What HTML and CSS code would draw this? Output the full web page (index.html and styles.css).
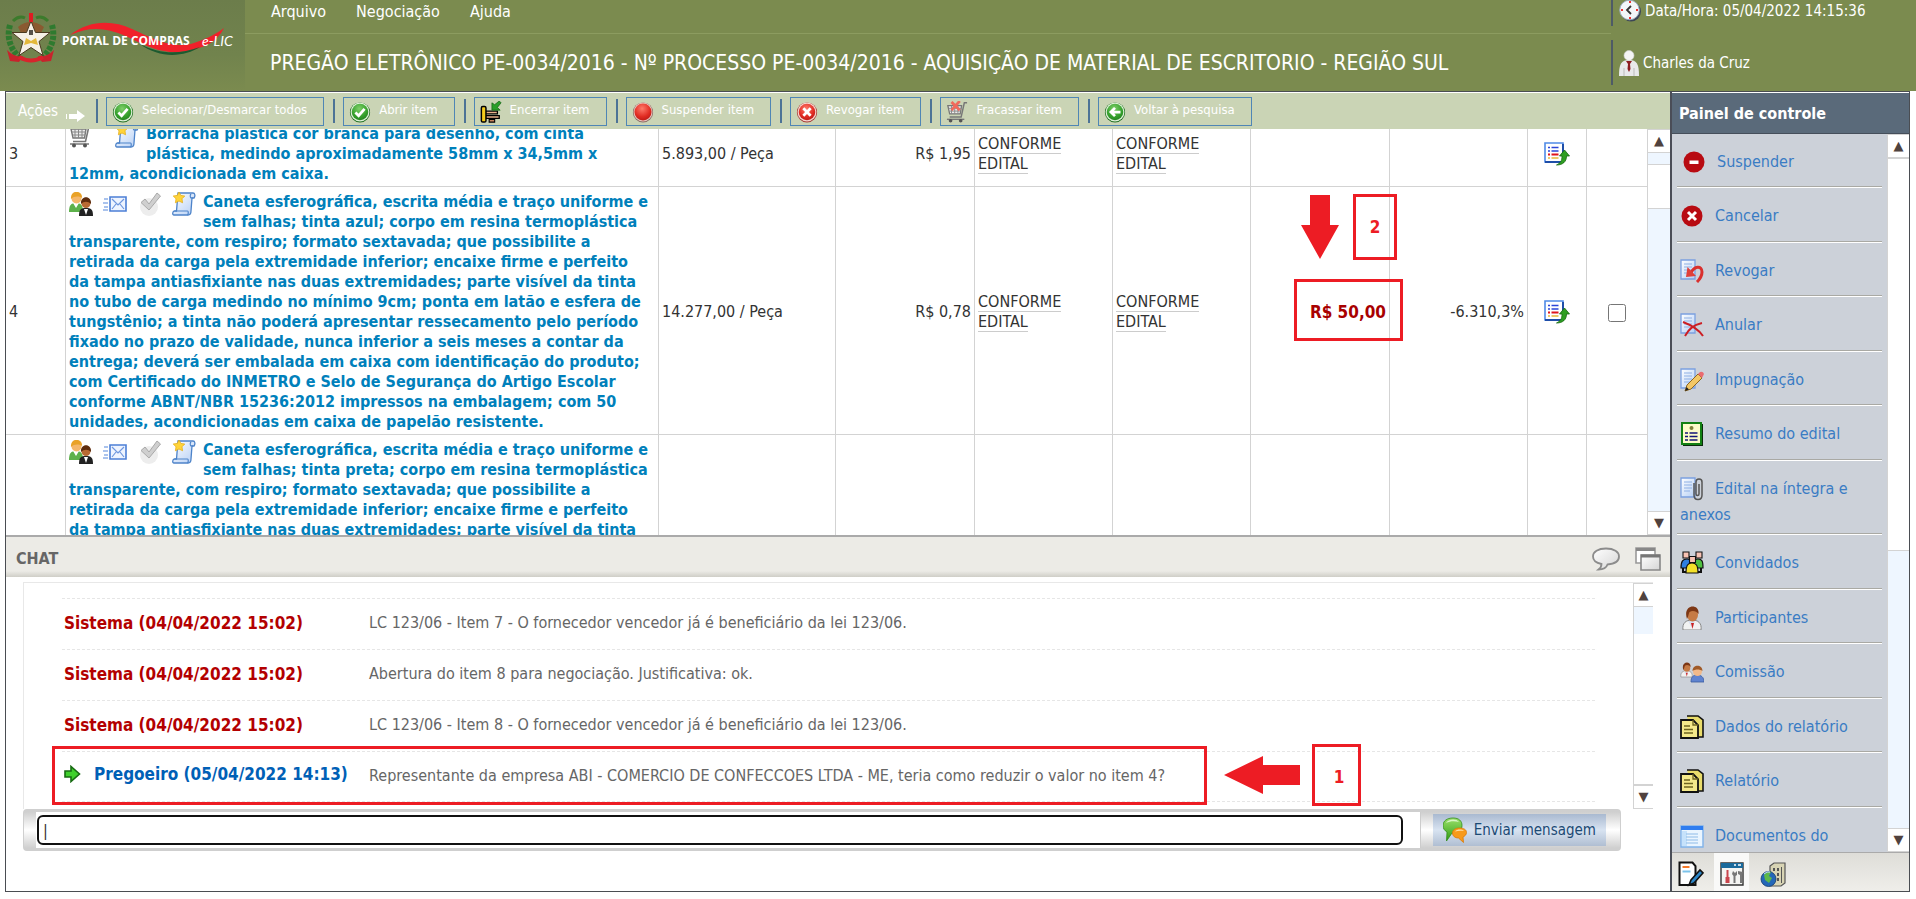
FILE: index.html
```html
<!DOCTYPE html>
<html lang="pt-BR">
<head>
<meta charset="utf-8">
<title>Portal de Compras e-LIC</title>
<link rel="stylesheet" href="styles.css">
</head>
<body>
<svg class="defs" aria-hidden="true">
  <defs>
    <radialGradient id="gGreen" cx=".45" cy=".3" r=".8"><stop offset="0" stop-color="#7fd06a"/><stop offset=".6" stop-color="#35a02c"/><stop offset="1" stop-color="#1d7a1c"/></radialGradient>
    <radialGradient id="gRed" cx=".45" cy=".3" r=".8"><stop offset="0" stop-color="#ff7a6a"/><stop offset=".6" stop-color="#e02b22"/><stop offset="1" stop-color="#b01512"/></radialGradient>
    <linearGradient id="gDoc" x1="0" y1="0" x2="1" y2="1"><stop offset="0" stop-color="#ffffff"/><stop offset="1" stop-color="#b5cff5"/></linearGradient>
    <linearGradient id="gBubble" x1="0" y1="0" x2="0" y2="1"><stop offset="0" stop-color="#9be06a"/><stop offset="1" stop-color="#2d9b12"/></linearGradient>
    <linearGradient id="gGray" x1="0" y1="0" x2="1" y2="1"><stop offset="0" stop-color="#ffffff"/><stop offset="1" stop-color="#d5d5d5"/></linearGradient>
  </defs>
  <symbol id="i-check" viewBox="0 0 24 24"><circle cx="12" cy="12.500" r="11" fill="#1e6e20"/><circle cx="12" cy="12" r="10.300" fill="#dff0d8"/><circle cx="12" cy="12" r="9" fill="url(#gGreen)"/><path d="M7 12.500l3.500 3.500 6.500-7.500" fill="none" stroke="#fff" stroke-width="3"/></symbol>
  <symbol id="i-back" viewBox="0 0 24 24"><circle cx="12" cy="12.500" r="11" fill="#1e6e20"/><circle cx="12" cy="12" r="10.300" fill="#dff0d8"/><circle cx="12" cy="12" r="9" fill="url(#gGreen)"/><path d="M18 12H9M12 7.500L7.500 12l4.500 4.500" fill="none" stroke="#fff" stroke-width="3"/></symbol>
  <symbol id="i-stop" viewBox="0 0 24 24"><circle cx="12" cy="12.500" r="11" fill="#8a6b66"/><circle cx="12" cy="12" r="10.300" fill="#e8c4bd"/><circle cx="12" cy="12" r="9.300" fill="url(#gRed)"/></symbol>
  <symbol id="i-revoke" viewBox="0 0 24 24"><circle cx="12" cy="12.500" r="11" fill="#a43a34"/><circle cx="12" cy="12" r="10.300" fill="#f6d4cf"/><circle cx="12" cy="12" r="9" fill="url(#gRed)"/><path d="M8 8l8 8M16 8l-8 8" stroke="#fff" stroke-width="3"/></symbol>
  <symbol id="i-gavel" viewBox="0 0 24 24"><path d="M6 11h13v3H6zM6 16h15v3H6z" fill="#e8b08a" stroke="#000" stroke-width="1.400"/><rect x="1.500" y="6" width="5" height="17" rx="1.500" fill="#f4cb1c" stroke="#000" stroke-width="1.600"/><path d="M10 20h6v3h-6z" fill="#c98560" stroke="#000" stroke-width="1.200"/><path d="M23 2l-2-2-5 4-3-2v8h9l-3-3z" fill="#2aa02a" stroke="#176417" stroke-width=".8"/></symbol>
  <symbol id="i-cart" viewBox="0 0 24 24"><path d="M2 5h15l-1.500 9H4z" fill="#ececec" stroke="#777" stroke-width="1.400"/><path d="M6 5v9M9.500 5v9M13 5v9M3 8h14M4 11h12" stroke="#888" stroke-width="1"/><path d="M23 2h-3l-3.500 15.500H4" fill="none" stroke="#777" stroke-width="1.600"/><path d="M1 20h19" stroke="#777" stroke-width="1.500"/><circle cx="5" cy="21.500" r="2" fill="#555"/><circle cx="16" cy="21.500" r="2" fill="#555"/></symbol>
  <symbol id="i-cartx" viewBox="0 0 24 24"><use href="#i-cart"/><path d="M6 1l9 9M15 0L6 10" stroke="#f06a5c" stroke-width="3"/></symbol>
  <symbol id="i-scroll" viewBox="0 0 24 24"><path d="M6 1h15c2 0 2.500 3 1 5h-2l-1 13c0 2-1 4-3 4H2c-2 0-1.500-4 .5-4h2z" fill="url(#gDoc)" stroke="#4d83c9" stroke-width="1.300"/><path d="M2.500 19h13c1 0 1 3 0 4M19 2c-1 1-1 3 0 4h2" fill="none" stroke="#4d83c9" stroke-width="1.200"/><path d="M7 0l1.800 3.400 4 .6-2.800 2.800.6 4L7 9l-3.600 1.800.6-4L1.200 4l4-.6z" fill="#ffd43a" stroke="#e3a80c" stroke-width=".7"/></symbol>
  <symbol id="i-people" viewBox="0 0 24 24"><path d="M0 20c0-7 2-9 7-9s7 2 7 9z" fill="#5db14b"/><path d="M4 11l3 5 3-5z" fill="#fff"/><circle cx="7.500" cy="6.500" r="5" fill="#f5b76a"/><path d="M2 7c-1-10 12-9 11-1-3-2-8-2-11 1z" fill="#e9a227"/><path d="M10 24c0-7 2-8 7-8s7 1 7 8z" fill="#222"/><path d="M15 17l2 6 2-6z" fill="#fff"/><circle cx="17" cy="11.500" r="4.500" fill="#b96a33"/><path d="M12 12c-1-9 11-9 10 0-3-3-7-3-10 0z" fill="#5e2c0d"/></symbol>
  <symbol id="i-mail" viewBox="0 0 24 18"><path d="M7 2h16v14H7z" fill="#eef4ff" stroke="#4c7fd6" stroke-width="1.600"/><path d="M9 4l6 6 6-6M9 14l4-5M21 14l-4-5" fill="none" stroke="#6f97de" stroke-width="1.200"/><path d="M1 4h4M0 8h5M1 12h4M0 15h5" stroke="#8fb0e8" stroke-width="1.300"/></symbol>
  <symbol id="i-tick" viewBox="0 0 24 24"><circle cx="11" cy="15" r="9" fill="#ededed"/><path d="M3 10.500L7 7l4 5L19 1l3.500 3L11 18z" fill="#cfcfcf" stroke="#a9a9a9" stroke-width="1"/></symbol>
  <symbol id="i-export" viewBox="0 0 26 24"><path d="M1 1h18v19H1z" fill="#fff" stroke="#4f8ae6" stroke-width="1.600"/><path d="M19 2v18H1" fill="none" stroke="#1f4ea8" stroke-width="2"/><path d="M4 5.500h2M4 9h2M7.500 5.500h7M7.500 9h7" stroke="#2b46d8" stroke-width="1.600"/><path d="M4 12.500h2M7.500 12.500h7" stroke="#e0141c" stroke-width="1.800"/><path d="M4 16h2M7.500 16h7" stroke="#e7b93a" stroke-width="1.600"/><path d="M20.500 8l5 6h-3c0 6-4 9-10 9 4-2 5.500-4 5.500-9h-2.500z" fill="#2f9e22" stroke="#17680f" stroke-width=".8"/></symbol>
  <symbol id="i-page" viewBox="0 0 24 24"><path d="M1 1h14v19H1z" fill="url(#gDoc)" stroke="#7ba0e0" stroke-width="1.300"/><path d="M4 5h8M4 8h8M4 11h8M4 14h6" stroke="#8fb0e4" stroke-width="1"/></symbol>
  <symbol id="i-reports" viewBox="0 0 24 24"><path d="M7 1h11l5 4v17H12" fill="#e9dc6b" stroke="#111" stroke-width="1.600"/><path d="M1 5h12l5 5v13H1z" fill="#f4e98a" stroke="#111" stroke-width="1.800"/><path d="M13 5v5h5M4 11h6M4 14.500h9M4 18h9" fill="none" stroke="#6d6420" stroke-width="1.300"/></symbol>
  <symbol id="i-head" viewBox="0 0 24 24"><path d="M3 24c-1-7 3-10 9-10s10 3 9 10z" fill="#f2f2f2" stroke="#888" stroke-width="1"/><path d="M8 15l4 7 3-7z" fill="#d9e0ee"/><path d="M11 17l1.500 6 1.500-6z" fill="#c22"/><ellipse cx="12.500" cy="9" rx="5.500" ry="6.500" fill="#c67a45"/><path d="M7 13C2-2 20-3 18.500 8c-2-3-6-4-9-2-1 2-1 4-2.500 7z" fill="#7d3715"/></symbol>
</svg>

<header class="top">
  <div class="brand">
    <svg class="brand-art" viewBox="0 0 245 91" aria-hidden="true">
      <path d="M10 25q-5 18 9 32M52 25q5 18-9 32" fill="none" stroke="#2f7a2f" stroke-width="6" stroke-dasharray="4 1.500"/>
      <path d="M13 21q6-6 12-3M48 21q-6-6-12-3" stroke="#3c7b2c" stroke-width="3" fill="none"/>
      <path d="M7 50q8 8 16 6l-4 6-9-1zM54 50q-8 8-16 6l4 6 9-1z" fill="#c8232c"/>
      <path d="M19 57q12 7 24 0" stroke="#d8242c" stroke-width="4" fill="none"/>
      <path d="M18 27q12-10 26 0l-4 8H22z" fill="#8a5a30"/>
      <path d="M31 21l4.500 11.500 14.500 0-11 9 4 14-12-8-12 8 4-14-11-9 14.500 0z" fill="#f5f0e6" stroke="#4b3a20" stroke-width="1"/>
      <path d="M26 38l5 3 5-3 2 7-7-2-7 2z" fill="#e3b83b"/><path d="M29 30h4v5h-4z" fill="#55504a"/>
      <path d="M29 13h4v9h-4z" fill="#e01b22"/>
      <path d="M70 35C90 20 112 20 132 29c26 12 42 20 62 14 14-5 22-9 30-15-7 14-20 20-36 23-22 4-38-3-56-12-22-11-40-14-62-4z" fill="#f0202a"/>
      <path d="M140 44c20 10 38 11 60 3-16 10-40 12-60-3z" fill="#1d5a30"/>
    </svg>
    <span class="brand-name">PORTAL DE COMPRAS</span>
    <span class="brand-sub">e-LIC</span>
  </div>
  <div class="top-main">
    <nav class="menu">
      <a href="#">Arquivo</a><a href="#">Negociação</a><a href="#">Ajuda</a>
    </nav>
    <h1 class="title">PREGÃO ELETRÔNICO PE-0034/2016 - Nº PROCESSO PE-0034/2016 - AQUISIÇÃO DE MATERIAL DE ESCRITORIO - REGIÃO SUL</h1>
  </div>
  <div class="top-side">
    <div class="clock">
      <svg width="22" height="24" viewBox="0 0 22 24"><circle cx="12" cy="12.500" r="10" fill="#3c4656"/><circle cx="10.500" cy="11" r="9.800" fill="#f3f7fa" stroke="#9ab" stroke-width="1"/><path d="M12 7l-4 4 4 4" fill="none" stroke="#333" stroke-width="1.800"/><path d="M10 2h2v2h-2zM10 18h2v2h-2zM2 10h2v2H2zM17 10h2v2h-2z" fill="#e33"/></svg>
      <span>Data/Hora: 05/04/2022 14:15:36</span>
    </div>
    <div class="user">
      <svg width="20" height="26" viewBox="0 0 20 26"><path d="M0 26c0-12 2-16 10-16s10 4 10 16z" fill="#e8e9ea"/><path d="M5 18v8M15 18v8" stroke="#bbb"/><circle cx="10" cy="5.500" r="5" fill="#f4f4f4" stroke="#ccc" stroke-width=".6"/><path d="M7 11h6l-2 3 .5 5-1.500 3-1.500-3 .5-5z" fill="#8c1c20"/></svg>
      <span>Charles da Cruz</span>
    </div>
  </div>
</header>

<main class="app">
  <section class="work">
    <div class="toolbar">
      <span class="tb-label">Ações</span>
      <svg class="tb-arrow" width="20" height="14" viewBox="0 0 20 14"><path d="M0 5h1v5H0zM3 5h8V1l8 6-8 6v-3H3z" fill="#fff"/></svg>
      <button type="button" class="tb-btn"><svg><use href="#i-check"/></svg>Selecionar/Desmarcar todos</button>
      <button type="button" class="tb-btn"><svg><use href="#i-check"/></svg>Abrir item</button>
      <button type="button" class="tb-btn"><svg><use href="#i-gavel"/></svg>Encerrar item</button>
      <button type="button" class="tb-btn"><svg><use href="#i-stop"/></svg>Suspender item</button>
      <button type="button" class="tb-btn"><svg><use href="#i-revoke"/></svg>Revogar item</button>
      <button type="button" class="tb-btn"><svg><use href="#i-cartx"/></svg>Fracassar item</button>
      <button type="button" class="tb-btn"><svg><use href="#i-back"/></svg>Voltar à pesquisa</button>
    </div>

    <div class="grid-area">
      <div class="grid-view">
        <table class="items">
          <colgroup><col class="c-no"><col class="c-desc"><col class="c-qty"><col class="c-wide"><col class="c-val"><col class="c-val"><col class="c-wide"><col class="c-val"><col class="c-ico"><col class="c-no"></colgroup>
          <tbody>
            <tr>
              <td>3</td>
              <td class="desc"><span class="icons icons-two"><svg class="ic"><use href="#i-cart"/></svg><svg class="ic"><use href="#i-scroll"/></svg></span>Borracha plastica cor branca para desenho, com cinta<br>plástica, medindo aproximadamente 58mm x 34,5mm x<br>12mm, acondicionada em caixa.</td>
              <td>5.893,00 / Peça</td><td class="num">R$ 1,95</td>
              <td><abbr>CONFORME EDITAL</abbr></td><td><abbr>CONFORME EDITAL</abbr></td><td></td><td></td>
              <td class="mid"><button type="button" class="icon-btn" aria-label="Propostas"><svg class="export"><use href="#i-export"/></svg></button></td><td></td>
            </tr>
            <tr>
              <td>4</td>
              <td class="desc"><span class="icons"><svg class="ic"><use href="#i-people"/></svg><svg class="ic ic-mail"><use href="#i-mail"/></svg><svg class="ic"><use href="#i-tick"/></svg><svg class="ic"><use href="#i-scroll"/></svg></span>Caneta esferográfica, escrita média e traço uniforme e<br>sem falhas; tinta azul; corpo em resina termoplástica<br>transparente, com respiro; formato sextavada; que possibilite a<br>retirada da carga pela extremidade inferior; encaixe firme e perfeito<br>da tampa antiasfixiante nas duas extremidades; parte visível da tinta<br>no tubo de carga medindo no mínimo 9cm; ponta em latão e esfera de<br>tungstênio; a tinta não poderá apresentar ressecamento pelo período<br>fixado no prazo de validade, nunca inferior a seis meses a contar da<br>entrega; deverá ser embalada em caixa com identificação do produto;<br>com Certificado do INMETRO e Selo de Segurança do Artigo Escolar<br>conforme ABNT/NBR 15236:2012 impressos na embalagem; com 50<br>unidades, acondicionadas em caixa de papelão resistente.</td>
              <td>14.277,00 / Peça</td><td class="num">R$ 0,78</td>
              <td><abbr>CONFORME EDITAL</abbr></td><td><abbr>CONFORME EDITAL</abbr></td>
              <td class="num best">R$ 50,00
                <span class="mark mark-price"></span>
                <svg class="arrow arrow-down" viewBox="0 0 38 64"><path d="M9 0h20v30h9L19 64 0 30h9z"/></svg>
                <span class="mark mark-two">2</span>
              </td>
              <td class="num">-6.310,3%</td>
              <td class="mid"><button type="button" class="icon-btn" aria-label="Propostas"><svg class="export"><use href="#i-export"/></svg></button></td>
              <td class="mid"><input type="checkbox" class="pick" aria-label="Selecionar item 4"></td>
            </tr>
            <tr>
              <td></td>
              <td class="desc"><span class="icons"><svg class="ic"><use href="#i-people"/></svg><svg class="ic ic-mail"><use href="#i-mail"/></svg><svg class="ic"><use href="#i-tick"/></svg><svg class="ic"><use href="#i-scroll"/></svg></span>Caneta esferográfica, escrita média e traço uniforme e<br>sem falhas; tinta preta; corpo em resina termoplástica<br>transparente, com respiro; formato sextavada; que possibilite a<br>retirada da carga pela extremidade inferior; encaixe firme e perfeito<br>da tampa antiasfixiante nas duas extremidades; parte visível da tinta</td>
              <td></td><td></td><td></td><td></td><td></td><td></td><td></td><td></td>
            </tr>
          </tbody>
        </table>
      </div>
      <div class="scroll"><button type="button" class="sc-btn" aria-label="Subir">▲</button><div class="sc-track"><div class="sc-thumb thumb-grid"></div></div><button type="button" class="sc-btn" aria-label="Descer">▼</button></div>
    </div>

    <div class="chat-head">
      <h2>CHAT</h2>
      <svg width="28" height="24" viewBox="0 0 28 24"><path d="M14 1.500C6 1.500 1 5 1 9.500c0 4 3.500 6.500 8.500 7.500 0 2-1 4-3 5.500 5 0 8-2 9-5 7-.5 11.500-3.500 11.500-8 0-4.500-5-8-13-8z" fill="url(#gGray)" stroke="#8c8c8c" stroke-width="1.800"/></svg>
      <svg width="26" height="24" viewBox="0 0 26 24"><path d="M1 1h19v15H1z" fill="#fff" stroke="#999" stroke-width="1.600"/><path d="M1 2.500h19" stroke="#888" stroke-width="3"/><path d="M6 8h19v15H6z" fill="url(#gGray)" stroke="#888" stroke-width="1.600"/><path d="M6 9h19" stroke="#777" stroke-width="3"/></svg>
    </div>

    <div class="chat">
      <div class="log">
        <div class="msgs">
          <div class="msg"><strong>Sistema (04/04/2022 15:02)</strong><span>LC 123/06 - Item 7 - O fornecedor vencedor já é beneficiário da lei 123/06.</span></div>
          <div class="msg"><strong>Sistema (04/04/2022 15:02)</strong><span>Abertura do item 8 para negociação. Justificativa: ok.</span></div>
          <div class="msg"><strong>Sistema (04/04/2022 15:02)</strong><span>LC 123/06 - Item 8 - O fornecedor vencedor já é beneficiário da lei 123/06.</span></div>
          <div class="msg own"><strong><svg width="17" height="18" viewBox="0 0 17 18"><path d="M1 6h6V1.500l8.500 7.500L7 16.500V12H1z" fill="#3fd02c" stroke="#176b12" stroke-width="1.600"/></svg>Pregoeiro (05/04/2022 14:13)</strong><span>Representante da empresa ABI - COMERCIO DE CONFECCOES LTDA - ME, teria como reduzir o valor no item 4?</span>
            <span class="mark mark-msg"></span>
            <svg class="arrow arrow-left" viewBox="0 0 76 38"><path d="M0 19L39 0v9h37v20H39v9z"/></svg>
            <span class="mark mark-one">1</span>
          </div>
        </div>
        <div class="scroll"><button type="button" class="sc-btn" aria-label="Subir">▲</button><div class="sc-track"><div class="sc-thumb thumb-log"></div></div><button type="button" class="sc-btn" aria-label="Descer">▼</button></div>
      </div>
      <form class="send">
        <div class="field"><input type="text" value="|" aria-label="Mensagem"></div>
        <button type="button" class="send-btn"><svg width="24" height="26" viewBox="0 0 24 26"><path d="M10 1C4 1 0 4 0 8.500c0 3 1.500 5 4 6.500l-.5 9L9 16c7 0 10-3 10-7.500C19 4 16 1 10 1z" fill="url(#gBubble)" stroke="#2f8d16" stroke-width=".8"/><path d="M3 6c2-4 10-5 13-1-4-1-9-1-13 1z" fill="#d9f6c8"/><path d="M16.500 11c-4 0-7 2-7 5s2.500 5 6 5l5 4.500-.5-5.500c2-1 3.500-2.500 3.500-4.500 0-3-3-4.500-7-4.500z" fill="#f79a1c" stroke="#d97a08" stroke-width=".8"/><path d="M12 14.500c2-2.500 7-2.500 9-.5-3-.5-6-.5-9 .5z" fill="#ffe0a8"/></svg>Enviar mensagem</button>
      </form>
    </div>
  </section>

  <aside class="panel">
    <h2 class="panel-title">Painel de controle</h2>
    <div class="panel-body">
      <ul class="links">
        <li class="first"><svg class="ic" viewBox="0 0 24 24"><circle cx="12" cy="12" r="10.500" fill="#b80b12"/><path d="M7.500 10.500h9v3.500h-9z" fill="#fff"/></svg><a href="#">Suspender</a></li>
        <li><svg class="ic" viewBox="0 0 24 24"><circle cx="12" cy="12" r="10.500" fill="#b80b12"/><path d="M8 8l8 8M16 8l-8 8" stroke="#fff" stroke-width="3"/></svg><a href="#">Cancelar</a></li>
        <li><svg class="ic" viewBox="0 0 24 24"><use href="#i-page"/><path d="M11 14c3-7 11-8 11-1 0 4-2 7-5 10" fill="none" stroke="#d9302e" stroke-width="3"/><path d="M6 18l1.500-10 8.500 9z" fill="#e0403a"/></svg><a href="#">Revogar</a></li>
        <li><svg class="ic" viewBox="0 0 24 24"><use href="#i-page"/><path d="M3 9c8 3 16 8 20 14M22 10C13 12 9 16 5 23" fill="none" stroke="#cc1f24" stroke-width="2"/></svg><a href="#">Anular</a></li>
        <li><svg class="ic" viewBox="0 0 24 24"><use href="#i-page"/><path d="M5 23l2-6L18 6l4 4L11 21z" fill="#f3c765" stroke="#8d6620" stroke-width="1"/><path d="M18 6l2-2q3-1 4 2l-2 4z" fill="#ea6b70"/><path d="M5 23l1.500-4 2.500 2.500z" fill="#222"/></svg><a href="#">Impugnação</a></li>
        <li><svg class="ic" viewBox="0 0 24 24"><path d="M3 2h20v22H3z" fill="#0c2a0c"/><path d="M2 1h19v21H2z" fill="#fdfcc9" stroke="#128012" stroke-width="2"/><circle cx="11.500" cy="6" r="2" fill="#80803a"/><path d="M5 11h3M5 14.500h3M5 18h3M9.500 11h8M9.500 14.500h8M9.500 18h8" stroke="#15157a" stroke-width="1.600"/></svg><a href="#">Resumo do edital</a></li>
        <li><svg class="ic" viewBox="0 0 24 24"><use href="#i-page"/><path d="M14 6v12c0 6 8 6 8 0V5c0-4-6-4-6 0v12c0 2 3 2 3 0V7" fill="none" stroke="#555" stroke-width="1.500"/></svg><a href="#">Edital na íntegra e<br>anexos</a></li>
        <li><svg class="ic" viewBox="0 0 24 24"><path d="M1 17c0-7 2-9 6-9s5 2 5 9z" fill="#2f7fe0" stroke="#111" stroke-width="1.200"/><path d="M12 17c0-7 2-9 6-9s5 2 5 9z" fill="#4fc03f" stroke="#111" stroke-width="1.200"/><path d="M6 22c0-8 2-10 6-10s6 2 6 10z" fill="#f4e12a" stroke="#111" stroke-width="1.200"/><path d="M3 1h6v6H3zM16 1h6v6h-6zM9.500 5.500h6v6h-6z" fill="#f9c3b4" stroke="#111" stroke-width="1.100"/><path d="M3 17v4h3M21 17v4h-3" stroke="#111" stroke-width="2" fill="none"/></svg><a href="#">Convidados</a></li>
        <li><svg class="ic"><use href="#i-head"/></svg><a href="#">Participantes</a></li>
        <li><svg class="ic" viewBox="0 0 24 24"><use href="#i-head" x="-1" y="1" width="15" height="17"/><path d="M11 22c0-5 2-7 6-7s7 2 7 7z" fill="#5f83d0" stroke="#3a5aa0" stroke-width=".8"/><circle cx="17.500" cy="11.500" r="4.500" fill="#f1b98a"/><path d="M12.500 11c0-7 10-7 10 0-3-2-7-2-10 0z" fill="#a05a28"/></svg><a href="#">Comissão</a></li>
        <li><svg class="ic"><use href="#i-reports"/></svg><a href="#">Dados do relatório</a></li>
        <li><svg class="ic"><use href="#i-reports"/></svg><a href="#">Relatório</a></li>
        <li><svg class="ic" viewBox="0 0 24 24"><path d="M1 2h22v21H1z" fill="#eaf5ff" stroke="#7fb2ea" stroke-width="1.400"/><path d="M1 2h22v4H1z" fill="#2f7df0"/><path d="M2 7h5v15H2z" fill="#c6e2fb"/><path d="M6 10h12M6 13h12M6 16h12M6 19h12" stroke="#8dbbe8" stroke-width="1.200"/></svg><a href="#">Documentos do</a></li>
      </ul>
      <div class="scroll"><button type="button" class="sc-btn" aria-label="Subir">▲</button><div class="sc-track"><div class="sc-thumb thumb-panel"></div></div><button type="button" class="sc-btn" aria-label="Descer">▼</button></div>
    </div>
    <div class="tabs">
      <button type="button" aria-label="Editar"><svg width="26" height="26" viewBox="0 0 26 26"><path d="M1.500 1.500h13l3 3.500v19h-16z" fill="#fff" stroke="#111" stroke-width="2"/><path d="M4.500 6h7" stroke="#f47a2a" stroke-width="2"/><path d="M4.500 10.500h8" stroke="#7cc3ea" stroke-width="2"/><path d="M11 24l2-5L22 9l3 3-9 10z" fill="#2c86c8" stroke="#111" stroke-width="1.600"/></svg></button>
      <button type="button" class="on" aria-label="Ferramentas"><svg width="24" height="24" viewBox="0 0 24 24"><path d="M1 1h22v22H1z" fill="#f4f4f2" stroke="#333" stroke-width="1.400"/><path d="M1 1h22v5H1z" fill="#1a6a9c"/><path d="M14 3h2M18 3h3" stroke="#fff" stroke-width="1.500"/><path d="M6.500 8h2v7h1v6h-4v-6h1z" fill="#c9444c"/><path d="M13 9l2 2 2-2v4l-1.500 1v7h-2v-7L12 12zM18 9v3l2 1v8h2v-8l1-3z" fill="#777"/></svg></button>
      <button type="button" aria-label="Internet"><svg width="28" height="26" viewBox="0 0 28 26"><path d="M10 5l4-3h11v20l-4 3H10z" fill="#d8d4b4" stroke="#555" stroke-width="1.200"/><path d="M13 7h2v3h-2zM17 7h2v3h-2zM17 12h2v3h-2zM17 17h2v3h-2zM21 6h1v16h-1z" fill="#555"/><circle cx="8.500" cy="18" r="7.500" fill="#2467b8" stroke="#123a6c" stroke-width=".8"/><path d="M4 14q3-4 7-3l-2 4 3 2-3 5-4-3z" fill="#5db84a"/><path d="M4 13q3-3 6-2" stroke="#cfe5ff" fill="none"/></svg></button>
    </div>
  </aside>
</main>
</body>
</html>
```

FILE: styles.css
```css
:root {
  --sans: "DejaVu Sans Condensed", Tahoma, "Noto Sans", sans-serif;
  --mark: #ed1c24;
  --line: #d3d3d3;
}
* { box-sizing: border-box; }
html, body { height: 100%; }
body {
  margin: 0;
  display: flex;
  flex-direction: column;
  background: #fff;
  color: #333;
  font: 16px/20px var(--sans);
}
button { font: inherit; color: inherit; cursor: pointer; }
a { text-decoration: none; color: inherit; }
h1, h2 { margin: 0; }
.defs { position: absolute; width: 0; height: 0; }
.ic { width: 24px; height: 24px; }

/* header */
.top {
  display: flex;
  flex: none;
  height: 91px;
  background: #7b8b4f;
  color: #fff;
}
.brand {
  position: relative;
  width: 245px;
  background: linear-gradient(180deg, #6c7d4b, #71834d 60%, #7b8b4f);
}
.brand-art { display: block; width: 245px; height: 91px; }
.brand-name, .brand-sub { position: absolute; top: 31px; line-height: 20px; white-space: nowrap; }
.brand-name { left: 62px; font-family: "Open Sans", sans-serif; font-size: 12px; font-weight: 700; }
.brand-sub { left: 202px; font-family: Lato, sans-serif; font-size: 14px; font-style: italic; }
.top-main { flex: 1; }
.menu {
  display: flex;
  gap: 30px;
  height: 34px;
  padding: 2px 0 0 26px;
  border-bottom: 1px solid #8c9c60;
}
.title {
  padding: 15px 0 0 25px;
  font-size: 21px;
  line-height: 28px;
  font-weight: 400;
  white-space: nowrap;
}
.top-side {
  display: flex;
  flex-direction: column;
  gap: 14px;
  width: 305px;
  font-size: 15px;
}
.clock, .user {
  display: flex;
  align-items: center;
  gap: 4px;
  padding-left: 6px;
  border-left: 2px solid #4e5b66;
}
.clock { height: 26px; padding-bottom: 4px; }
.user { height: 45px; }

/* frame */
.app {
  flex: 1;
  min-height: 0;
  display: flex;
  margin: 0 6px 7px 5px;
  border: 1px solid #4a4d52;
}
.work {
  flex: 1;
  min-width: 0;
  display: flex;
  flex-direction: column;
  border-right: 2px solid #4a4d57;
}

/* toolbar */
.toolbar {
  display: flex;
  flex: none;
  align-items: center;
  height: 37px;
  border-top: 1px solid #fff;
  padding-left: 12px;
  background: #cad4b5;
  color: #fff;
}
.tb-label { width: 48px; font-size: 15px; }
.tb-arrow { margin: 10px 11px 0 0; }
.tb-btn {
  position: relative;
  display: flex;
  align-items: center;
  gap: 8px;
  height: 29px;
  margin-left: 9px;
  margin-right: 10px;
  padding: 0 16px 3px 5px;
  border: 1px solid #4f86b5;
  background: none;
  font-size: 13px;
  white-space: nowrap;
}
.tb-btn svg { width: 22px; height: 22px; margin-top: 5px; }
.tb-btn::before {
  content: "";
  position: absolute;
  left: -11px;
  top: 1px;
  width: 2px;
  height: 24px;
  background: #4d7396;
}

/* item table */
.grid-area { flex: 1; min-height: 0; display: flex; }
.grid-view { flex: 1; min-width: 0; overflow: hidden; }
.items {
  width: 100%;
  margin-top: -10px;
  table-layout: fixed;
  border-collapse: separate;
  border-spacing: 0;
}
.c-no { width: 60px; }
.c-desc { width: 593px; }
.c-qty { width: 177px; }
.c-val { width: 138px; }
.c-wide { width: 139px; }
.c-ico { width: 59px; }
.items td {
  padding: 5px 3px 2px;
  border-right: 1px solid var(--line);
  border-bottom: 1px solid var(--line);
  vertical-align: middle;
}
.items td:last-child { border-right: 0; }
.items .desc { color: #0080bb; font-weight: 700; white-space: nowrap; vertical-align: top; }
.icons { float: left; display: flex; justify-content: space-between; width: 134px; height: 40px; padding-right: 7px; }
.icons-two { width: 77px; }
.icons .ic-mail { height: 18px; margin-top: 3px; }
.num { text-align: right; }
.mid { text-align: center; }
.items .best { position: relative; padding-right: 3px; color: #a80000; font-size: 17px; font-weight: 700; }
abbr { border-bottom: 1px solid #ccc; }
.icon-btn { padding: 0; border: 0; background: none; vertical-align: middle; }
.export { display: block; width: 26px; height: 24px; }
.pick { width: 18px; height: 18px; margin: 0; vertical-align: middle; }

/* scrollbars */
.scroll {
  flex: none;
  display: flex;
  flex-direction: column;
  width: 23px;
  border-left: 1px solid var(--line);
  background: #eef6ff;
}
.sc-btn {
  height: 24px;
  padding: 0;
  border: 1px solid var(--line);
  border-width: 1px 0;
  background: #fff;
  color: #50423e;
  font: 13px/20px "DejaVu Sans", sans-serif;
}
.sc-track { flex: 1; min-height: 0; }
.sc-thumb { background: #fff; border: 1px solid var(--line); border-width: 1px 0; }
.thumb-grid { height: 45px; margin-top: 11px; }
.thumb-log { height: 100%; border-top: 27px solid #eef6ff; }
.thumb-panel { height: 393px; }

/* chat */
.chat-head {
  display: flex;
  flex: none;
  align-items: center;
  gap: 15px;
  height: 42px;
  padding: 4px 9px 0 10px;
  border-top: 2px solid #aaa;
  background: linear-gradient(#ecebe6 85%, #cfcec7);
}
.chat-head h2 { flex: 1; font-size: 16px; color: #666; }
.chat { flex: none; padding: 5px 17px 40px; }
.log { display: flex; border: 1px solid #e8e8e8; border-width: 1px 0 0 1px; }
.msgs { flex: 1; padding: 15px 38px 7px; }
.msg {
  position: relative;
  display: grid;
  grid-template-columns: 305px 1fr;
  align-items: center;
  height: 51px;
  padding: 0 2px 2px;
  border-top: 1px dashed #e6e6e6;
  color: #666;
}
.msg:last-child { border-bottom: 1px dashed #e6e6e6; }
.msg strong { display: flex; align-items: center; gap: 13px; font-size: 17px; color: #b30000; }
.msg.own strong { padding-bottom: 4px; color: #0060b6; }
.log .scroll { width: 20px; }
.send {
  display: flex;
  align-items: center;
  height: 42px;
  margin-right: 32px;
  padding: 0 14px 0 12px;
  border: 2px solid #cfcfcf;
  border-width: 3px 1px;
  border-radius: 4px;
  background: linear-gradient(#cfcfcf, #fff 50%, #cfcfcf);
}
.field { flex: 1; height: 36px; padding: 3px 17px 3px 1px; background: #fff; border-right: 1px solid #ccc; }
.field input {
  width: 100%;
  height: 30px;
  padding: 0 4px;
  border: 2px solid #111;
  border-radius: 6px;
  outline: 0;
  background: #fff;
  color: #333;
  font: 16px/20px var(--sans);
}
.send-btn {
  display: flex;
  align-items: center;
  gap: 7px;
  height: 32px;
  margin-left: 12px;
  padding: 0 10px;
  border: 0;
  background: linear-gradient(#a9b9d0, #d8e3f1 50%, #b0bed2);
  color: #1c4a74;
  font-size: 15px;
  white-space: nowrap;
}

/* control panel */
.panel { flex: none; width: 237px; display: flex; flex-direction: column; }
.panel-title {
  flex: none;
  height: 42px;
  padding: 11px 7px;
  border-top: 1px solid #fff;
  border-bottom: 1px solid #454e5a;
  background: #5a6a7a;
  color: #fff;
  font-size: 16px;
  line-height: 20px;
}
.panel-body { flex: 1; min-height: 0; display: flex; background: #ccd1d9; overflow: hidden; }
.panel-body .scroll { width: 22px; }
.links { flex: 1; margin: 0; padding: 0 5px; list-style: none; overflow: hidden; color: #3a7cc4; }
.links li { padding: 12px 3px 9px; border-bottom: 1px solid #fff; box-shadow: inset 0 -1px #a9a9a4; }
.links li:nth-child(even) { padding-bottom: 10px; }
.links .ic { margin: 4px 11px 4px 0; vertical-align: middle; }
.links .first { padding-left: 5px; }
.tabs { flex: none; display: flex; height: 39px; border-top: 1px solid #aaa; background: linear-gradient(#deddd8, #efeeea); }
.tabs button { display: flex; align-items: center; padding: 3px 5px 0 6px; border: 0; background: none; margin-right: 5px; }
.tabs .on { background: #f9f9f8; }

/* callouts */
.mark {
  position: absolute;
  display: flex;
  align-items: center;
  justify-content: center;
  border: 3px solid var(--mark);
  color: var(--mark);
  font-weight: 700;
  font-size: 17px;
}
.arrow { position: absolute; fill: var(--mark); }
.mark-price { right: -14px; top: 92px; width: 109px; height: 62px; }
.arrow-down { right: 50px; top: 8px; width: 38px; height: 64px; }
.mark-two { right: -8px; top: 7px; width: 44px; height: 66px; }
.mark-msg { left: -10px; top: -6px; width: 1155px; height: 59px; }
.arrow-left { left: 1162px; top: 4px; width: 76px; height: 38px; }
.mark-one { left: 1250px; top: -8px; width: 49px; height: 62px; padding: 4px 0 0 5px; }
```
